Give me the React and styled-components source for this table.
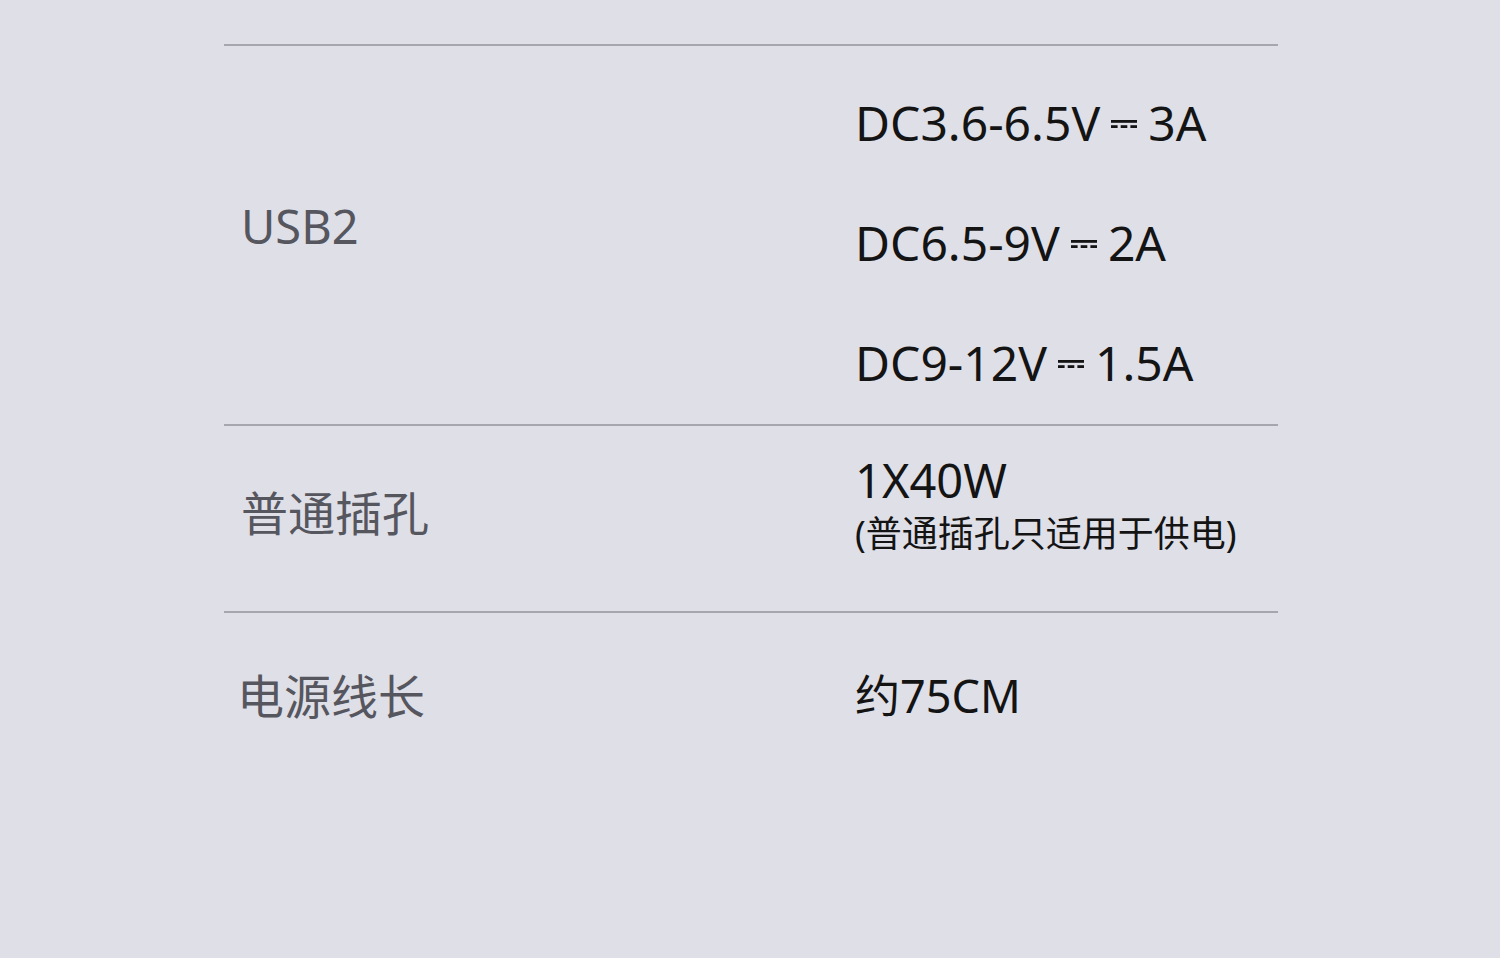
import React from 'react'
import styled, { createGlobalStyle } from 'styled-components'

const GlobalStyle = createGlobalStyle`
  html, body {
    margin: 0;
    padding: 0;
    background: #dfdfe7;
  }
  body {
    font-family: "Noto Sans", "Noto Sans CJK SC", sans-serif;
  }
`

const specs = [
  {
    label: 'USB2',
    values: [
      ['DC3.6-6.5V', '3A'],
      ['DC6.5-9V', '2A'],
      ['DC9-12V', '1.5A'],
    ],
  },
]

function DcMark() {
  return (
    <Mark viewBox="0 0 26 10" width="26" height="10">
      <rect x="0" y="1" width="26" height="2.8" fill="#141414" />
      <rect x="0" y="6.2" width="6.6" height="2.8" fill="#141414" />
      <rect x="9.7" y="6.2" width="6.6" height="2.8" fill="#141414" />
      <rect x="19.4" y="6.2" width="6.6" height="2.8" fill="#141414" />
    </Mark>
  )
}

export default function App() {
  return (
    <>
      <GlobalStyle />
      <Page>
        <Table>
          {specs.map((s) => (
            <Row key={s.label} $pad="16px 0 2px">
              <Label $lift={32}>{s.label}</Label>
              <Values>
                {s.values.map(([v, a]) => (
                  <VoltLine key={v}>
                    {v}
                    <DcMark />
                    {a}
                  </VoltLine>
                ))}
              </Values>
            </Row>
          ))}
          <Row $pad="24px 0 50px">
            <Label $lift={-14}>普通插孔</Label>
            <Values>
              <Value $gap={-3}>1X40W</Value>
              <Note>(普通插孔只适用于供电)</Note>
            </Values>
          </Row>
          <Row $pad="53px 0 0">
            <Label $lift={0} $shift={-4}>电源线长</Label>
            <Values>
              <Value $size={45}>约75CM</Value>
            </Values>
          </Row>
        </Table>
      </Page>
    </>
  )
}

const Page = styled.div`
  min-height: 958px;
  padding-top: 44px;
  box-sizing: border-box;
`
const Table = styled.div`
  width: 1054px;
  margin-left: 224px;
`
const Row = styled.div`
  display: grid;
  grid-template-columns: 631px 1fr;
  align-items: center;
  border-top: 2px solid #a6a6af;
  padding: ${(p) => p.$pad};
`
const Label = styled.div`
  padding-left: ${(p) => 17 + (p.$shift || 0)}px;
  font-size: 47px;
  line-height: 60px;
  color: #56565f;
  margin-bottom: ${(p) => p.$lift}px;
`
const Values = styled.div`
  display: flex;
  flex-direction: column;
`
const VoltLine = styled.div`
  display: flex;
  align-items: center;
  height: 120px;
  font-size: 48px;
  color: #141414;
`
const Mark = styled.svg`
  margin: 4px 11px 0 11px;
  flex-shrink: 0;
`
const Value = styled.div`
  font-size: ${(p) => p.$size || 47}px;
  line-height: 60px;
  color: #141414;
  margin-bottom: ${(p) => p.$gap || 0}px;
`
const Note = styled.div`
  font-size: 36px;
  line-height: 54px;
  color: #141414;
`
